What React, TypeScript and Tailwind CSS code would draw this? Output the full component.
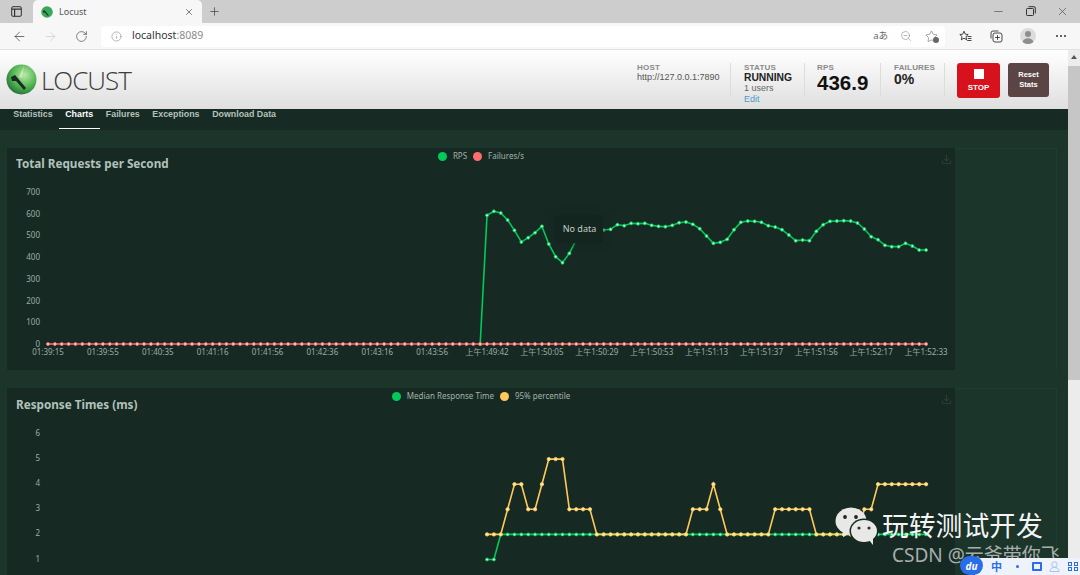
import { ArrowLeft, ArrowRight, Download, Info, Minus, Plus, RotateCw, Star, X, ZoomOut } from 'lucide-react';
import React from 'react';

const X0 = 48;
const STEP = 6.86;
const px = (i: number) => X0 + i * STEP;

// zoomed y readings of the rps curve, from the first sample after the jump
const RPS = [
	136, 124, 129, 150, 181, 216, 203, 188, 169, 222, 260, 278, 250, 210, 195, 185, 181, 180, 178, 164, 167, 160,
	161, 160, 166, 169, 170, 166, 158, 156, 163, 176, 198, 220, 217, 208, 179, 157, 153, 154, 157, 167, 171, 179,
	195, 212, 210, 212, 184, 164, 154, 153, 152, 153, 159, 177, 200, 209, 226, 230, 230, 220, 228, 240, 240,
];

const P95 = [
	2, 2, 2, 3, 4, 4, 3, 3, 4, 5, 5, 5, 3, 3, 3, 3, 2, 2, 2, 2, 2, 2, 2, 2, 2, 2, 2, 2, 2, 2, 3, 3, 3, 4, 3, 2, 2, 2,
	2, 2, 2, 2, 3, 3, 3, 3, 3, 3, 2, 2, 2, 2, 2, 2, 2, 3, 3, 4, 4, 4, 4, 4, 4, 4, 4,
];

const MEDIAN = P95.map((_, i) => (i < 2 ? 1 : 2));

const X_LABELS = [
	'01:39:15',
	'01:39:55',
	'01:40:35',
	'01:41:16',
	'01:41:56',
	'01:42:36',
	'01:43:16',
	'01:43:56',
	'上午1:49:42',
	'上午1:50:05',
	'上午1:50:29',
	'上午1:50:53',
	'上午1:51:13',
	'上午1:51:37',
	'上午1:51:56',
	'上午1:52:17',
	'上午1:52:33',
];

type Pt = [number, number];

function Series({ points, color, dot, r = 1.5 }: { points: Pt[]; color: string; dot: string; r?: number }) {
	return (
		<g>
			<polyline
				points={points.map((p) => p.join(',')).join(' ')}
				fill="none"
				stroke={color}
				strokeWidth={1.6}
			/>
			{points.map((p, i) => (
				<circle
					key={i}
					cx={p[0]}
					cy={p[1]}
					r={r}
					fill={dot}
					stroke={color}
					strokeWidth={0.8}
				/>
			))}
		</g>
	);
}

function YLabels({ labels }: { labels: [string, number][] }) {
	return (
		<g
			fill="#9dada6"
			fontSize={8}
			textAnchor="end"
		>
			{labels.map(([t, y]) => (
				<text
					key={t}
					x={40}
					y={y + 3}
				>
					{t}
				</text>
			))}
		</g>
	);
}

function RpsChart() {
	const rpsPts: Pt[] = [[px(63), 344], ...RPS.map((v, i): Pt => [px(64 + i), 170 + v / 3])];
	const failPts: Pt[] = Array.from({ length: 129 }, (_, i): Pt => [px(i), 344]);
	const ticks = ['700', '600', '500', '400', '300', '200', '100', '0'];
	return (
		<svg
			width={948}
			height={200}
			viewBox="7 170 948 200"
			className="block"
		>
			<YLabels labels={ticks.map((t, i): [string, number] => [t, 192 + i * 21.7])} />
			<Series
				points={rpsPts}
				color="#00ca5a"
				dot="#b4f5cf"
			/>
			<Series
				points={failPts}
				color="#ff6d6d"
				dot="#ffd2d2"
			/>
			<g
				fill="#9dada6"
				fontSize={8}
				textAnchor="middle"
			>
				{X_LABELS.map((t, i) => (
					<text
						key={t}
						x={X0 + i * 54.88}
						y={355}
					>
						{t}
					</text>
				))}
			</g>
		</svg>
	);
}

function ResponseChart() {
	const median: Pt[] = MEDIAN.map((v, i): Pt => [px(64 + i), 559.5 - (v - 1) * 25.1]);
	const p95: Pt[] = P95.map((v, i): Pt => [px(64 + i), 559.5 - (v - 1) * 25.1]);
	const ticks = ['6', '5', '4', '3', '2', '1'];
	return (
		<svg
			width={948}
			height={200}
			viewBox="7 410 948 200"
			className="block"
		>
			<YLabels labels={ticks.map((t, i): [string, number] => [t, 433 + i * 25.1])} />
			<Series
				points={median}
				color="#00ca5a"
				dot="#b4f5cf"
			/>
			<Series
				points={p95}
				color="#ffca5a"
				dot="#ffe9a8"
				r={1.7}
			/>
		</svg>
	);
}

function ChartCard({
	title,
	legend,
	children,
	className,
	titleClass,
}: {
	title: string;
	legend: [string, string][];
	children: React.ReactNode;
	className: string;
	titleClass: string;
}) {
	return (
		<div className={`relative w-[948px] shrink-0 overflow-hidden bg-[#162a23] ${className}`}>
			<div className="grid h-[22px] grid-cols-[1fr_auto_1fr] items-start">
				<h3 className={`pl-[9px] text-[11.7px] font-bold leading-[18px] text-[#b3c1bb] ${titleClass}`}>{title}</h3>
				<div className="flex items-center gap-[6px] pt-[3px]">
					{legend.map(([name, color]) => (
						<div
							key={name}
							className="flex items-center gap-[6px]"
						>
							<span
								className="h-[9px] w-[9px] rounded-full"
								style={{ background: color }}
							/>
							<span className="text-[8px] leading-[10px] text-[#a3b2ab]">{name}</span>
						</div>
					))}
				</div>
				<div className="flex justify-end pr-[3px] pt-[6px]">
					<Download
						size={11}
						strokeWidth={1}
						className="text-[#415d52]"
					/>
				</div>
			</div>
			{children}
		</div>
	);
}

function LocustLogo() {
	return (
		<svg
			width={31}
			height={31}
			viewBox="0 0 31 31"
		>
			<defs>
				<radialGradient
					id="locust-ball"
					cx="0.6"
					cy="0.35"
					r="0.75"
				>
					<stop
						offset="0"
						stopColor="#b9e8a8"
					/>
					<stop
						offset="0.55"
						stopColor="#4fb44f"
					/>
					<stop
						offset="1"
						stopColor="#1d5f35"
					/>
				</radialGradient>
			</defs>
			<circle
				cx={15.5}
				cy={15.5}
				r={15}
				fill="url(#locust-ball)"
			/>
			<path
				d="M18 2 L13 13 L16 14 Z"
				fill="#d7f3c8"
				opacity={0.7}
			/>
			<path
				d="M5 13 L9 11 L20 24 L18 26 L10 17 L6 17 Z"
				fill="#1b2a22"
			/>
		</svg>
	);
}

function Stat({ label, children, className }: { label: string; children: React.ReactNode; className: string }) {
	return (
		<div className={`h-[33px] border-r border-[#dcdcdc] ${className}`}>
			<div className="text-[8px] font-bold leading-[9px] tracking-[0.2px] text-[#8a8a8a]">{label}</div>
			{children}
		</div>
	);
}

function BrowserChrome() {
	return (
		<>
			<div className="flex h-[23px] items-center bg-[#cdcdce] text-[#333]">
				<div className="flex w-[33px] justify-center">
					<svg
						width={11}
						height={11}
						viewBox="0 0 11 11"
						fill="none"
						stroke="#333"
					>
						<rect
							x={0.7}
							y={0.7}
							width={9.6}
							height={9.6}
							rx={1.2}
						/>
						<path
							d="M0.7 3.2H10.3M3.6 3.2V10.3"
							strokeWidth={1.2}
						/>
					</svg>
				</div>
				<div className="flex h-full w-[169px] items-center rounded-t-[5px] bg-[#f7f7f7] pl-[8px] pr-[8px]">
					<svg
						width={12}
						height={12}
						viewBox="0 0 31 31"
					>
						<circle
							cx={15.5}
							cy={15.5}
							r={15}
							fill="#3aa85a"
						/>
						<path
							d="M5 13 L9 11 L20 24 L18 26 L10 17 L6 17 Z"
							fill="#1b2a22"
						/>
					</svg>
					<span className="ml-[6px] flex-1 text-[9px] text-[#555]">Locust</span>
					<X
						size={10}
						strokeWidth={1.5}
					/>
				</div>
				<Plus
					size={13}
					strokeWidth={1.2}
					className="ml-[6px]"
				/>
				<div className="flex-1" />
				<div className="flex items-center gap-[19px] pr-[11px]">
					<Minus
						size={13}
						strokeWidth={1}
					/>
					<svg
						width={13}
						height={13}
						viewBox="0 0 13 13"
						fill="none"
						stroke="#333"
					>
						<rect
							x={2.5}
							y={3.5}
							width={7}
							height={7}
							rx={0.8}
						/>
						<path d="M4.5 1.7H10a1.3 1.3 0 0 1 1.3 1.3V8.5" />
					</svg>
					<X
						size={13}
						strokeWidth={1}
					/>
				</div>
			</div>
			<div className="flex h-[27px] items-center border-b border-[#e2e2e2] bg-[#f7f7f7] text-[#333]">
				<div className="flex w-[101px] items-center pl-[12px]">
					<ArrowLeft
						size={15}
						strokeWidth={1.1}
					/>
					<ArrowRight
						size={15}
						strokeWidth={1.1}
						className="ml-[16px] text-[#c9c9c9]"
					/>
					<RotateCw
						size={13}
						strokeWidth={1.1}
						className="ml-[17px]"
					/>
				</div>
				<div className="flex h-[21px] w-[844px] items-center rounded-[4px] bg-white pl-[10px] pr-[7px]">
					<Info
						size={11}
						strokeWidth={1}
						className="text-[#666]"
					/>
					<span className="ml-[10px] flex-1 text-[10.5px] text-[#333]">
						localhost<span className="text-[#8b8b8b]">:8089</span>
					</span>
					<span className="text-[9.5px] text-[#666]">aあ</span>
					<ZoomOut
						size={12}
						strokeWidth={1}
						className="ml-[12px] text-[#777]"
					/>
					<span className="relative ml-[13px] flex">
						<Star
							size={13}
							strokeWidth={1}
							className="text-[#555]"
						/>
						<i className="absolute bottom-0 right-[-1px] h-[6px] w-[6px] rounded-full bg-[#666]" />
					</span>
				</div>
				<div className="flex flex-1 items-center pl-[14px]">
					<svg
						width={13}
						height={13}
						viewBox="0 0 13 13"
						fill="none"
						stroke="#333"
						strokeWidth={0.9}
					>
						<path d="M5 1.2 6.3 4.2 9.2 4.5 7 6.6 7.6 9.8 5 8.2 2.3 9.8 3 6.6 0.8 4.5 3.7 4.2Z" />
						<path d="M8.5 6.5H12.5M8.8 8.5H12.5M8.2 10.5H12.5" />
					</svg>
					<svg
						width={13}
						height={13}
						viewBox="0 0 13 13"
						fill="none"
						stroke="#333"
						strokeWidth={0.9}
						className="ml-[18px]"
					>
						<rect
							x={3}
							y={3}
							width={9}
							height={9}
							rx={2}
						/>
						<path d="M1 8.5V3a2 2 0 0 1 2-2h5.5M7.5 5.2V9.8M5.2 7.5H9.8" />
					</svg>
					<svg
						width={16}
						height={16}
						viewBox="0 0 16 16"
						className="ml-[17px]"
					>
						<circle
							cx={8}
							cy={8}
							r={8}
							fill="#dcdcdc"
						/>
						<circle
							cx={8}
							cy={6}
							r={3}
							fill="#8e8e8e"
						/>
						<path
							d="M2.6 14a5.6 5 0 0 1 10.8 0A8 8 0 0 1 2.6 14Z"
							fill="#8e8e8e"
						/>
					</svg>
					<span className="ml-[20px] flex gap-[2px]">
						<i className="h-[2px] w-[2px] rounded-full bg-[#333]" />
						<i className="h-[2px] w-[2px] rounded-full bg-[#333]" />
						<i className="h-[2px] w-[2px] rounded-full bg-[#333]" />
					</span>
				</div>
			</div>
		</>
	);
}

function LocustHeader() {
	return (
		<header className="flex h-[59px] items-start bg-gradient-to-b from-white to-[#dfdfdf] font-['Liberation_Sans',sans-serif]">
			<div className="flex items-center pl-[6px] pt-[14px]">
				<LocustLogo />
				<span className="ml-[4px] font-['Open_Sans',sans-serif] text-[26px] font-light leading-[30px] tracking-[-1px] text-[#3c3c3c]">
					LOCUST
				</span>
			</div>
			<div className="flex-1" />
			<div className="flex items-start pr-[19px] pt-[13px]">
				<Stat
					label="HOST"
					className="w-[94px]"
				>
					<div className="text-[9px] leading-[10px] text-[#555]">http://127.0.0.1:7890</div>
				</Stat>
				<Stat
					label="STATUS"
					className="w-[74px] pl-[13px]"
				>
					<div className="text-[10.3px] font-bold leading-[11px] text-[#222]">RUNNING</div>
					<div className="text-[9px] leading-[11px] text-[#666]">1 users</div>
					<div className="text-[9px] leading-[10px] text-[#4a9ccb]">Edit</div>
				</Stat>
				<Stat
					label="RPS"
					className="w-[76px] pl-[12px]"
				>
					<div className="text-[20.5px] font-bold leading-[22px] text-[#111]">436.9</div>
				</Stat>
				<Stat
					label="FAILURES"
					className="w-[64px] pl-[13px]"
				>
					<div className="text-[14px] font-bold leading-[15px] text-[#222]">0%</div>
				</Stat>
				<button className="ml-[12px] flex h-[35px] w-[43px] flex-col items-center rounded-[3px] bg-[#d8121c] pt-[6px]">
					<span className="h-[10px] w-[10px] bg-white" />
					<span className="mt-[4px] text-[8px] font-bold leading-[9px] text-white">STOP</span>
				</button>
				<button className="ml-[8px] flex h-[34px] w-[41px] flex-col items-center justify-center rounded-[3px] bg-[#5a4444] text-[7.5px] font-bold leading-[10px] text-white">
					<span>Reset</span>
					<span>Stats</span>
				</button>
			</div>
		</header>
	);
}

function LocustNav() {
	const tabs = ['Statistics', 'Charts', 'Failures', 'Exceptions', 'Download Data'];
	return (
		<nav className="flex h-[21px] bg-[#172b24] pl-[7px] font-['Liberation_Sans',sans-serif]">
			{tabs.map((tab) => (
				<span
					key={tab}
					className={`h-[20px] whitespace-nowrap px-[6.3px] text-[8.85px] font-bold leading-[11px] ${
						tab === 'Charts' ? 'border-b border-white text-white' : 'text-[#b5c2bc]'
					}`}
				>
					{tab}
				</span>
			))}
		</nav>
	);
}

export default function App() {
	return (
		<div className="relative flex h-[575px] w-[1080px] flex-col overflow-hidden bg-[#1b352b] font-['Noto_Sans','Noto_Sans_CJK_SC',sans-serif]">
			<BrowserChrome />
			<div className="flex min-h-0 flex-1">
				<main className="min-w-0 flex-1">
					<LocustHeader />
					<LocustNav />
					<div className="flex flex-col gap-[18px] pl-[7px] pt-[18px]">
						<div className="flex">
							<ChartCard
								title="Total Requests per Second"
								titleClass="pt-[6px]"
								legend={[
									['RPS', '#00ca5a'],
									['Failures/s', '#ff6d6d'],
								]}
								className="h-[222px]"
							>
								<RpsChart />
							</ChartCard>
							<div className="h-[222px] w-[102px] border-r border-t border-[#1f3c31]" />
						</div>
						<div className="flex">
							<ChartCard
								title="Response Times (ms)"
								titleClass="pt-[7px]"
								legend={[
									['Median Response Time', '#00ca5a'],
									['95% percentile', '#ffca5a'],
								]}
								className="h-[200px]"
							>
								<ResponseChart />
							</ChartCard>
							<div className="h-[200px] w-[102px] border-r border-t border-[#1f3c31]" />
						</div>
					</div>
				</main>
				<div className="flex w-[12px] flex-col items-center bg-[#ececec]">
					<div className="mt-[5px] h-0 w-0 border-x-[3px] border-b-[4px] border-x-transparent border-b-[#555]" />
					<div className="mt-[7px] h-[314px] w-full bg-[#c6c6c6]" />
				</div>
			</div>

			{/* tooltip over the rps chart */}
			<div className="absolute left-[556px] top-[215px] flex h-[28px] w-[47px] items-center justify-center rounded-[4px] bg-[#14251f] text-[9px] text-[#c4ccc8] shadow-[0_0_6px_#14251f]">
				No data
			</div>

			{/* wechat watermark */}
			<svg
				width={46}
				height={44}
				viewBox="0 0 46 44"
				className="absolute left-[835px] top-[505px]"
			>
				<ellipse
					cx={16}
					cy={16}
					rx={15.5}
					ry={13.5}
					fill="#e8e8e6"
				/>
				<path
					d="M8 25 L8 32 L15 28Z"
					fill="#e8e8e6"
				/>
				<circle
					cx={10}
					cy={12}
					r={1.9}
					fill="#222"
				/>
				<circle
					cx={21}
					cy={12}
					r={1.9}
					fill="#222"
				/>
				<ellipse
					cx={29}
					cy={26}
					rx={14.5}
					ry={12.5}
					fill="#162a23"
				/>
				<ellipse
					cx={29}
					cy={26}
					rx={13}
					ry={11}
					fill="#e8e8e6"
				/>
				<path
					d="M34 35 L38 40 L38 33Z"
					fill="#e8e8e6"
				/>
				<circle
					cx={24}
					cy={23}
					r={1.6}
					fill="#333"
				/>
				<circle
					cx={34}
					cy={23}
					r={1.6}
					fill="#333"
				/>
			</svg>
			<div className="absolute left-[882px] top-[508px] whitespace-nowrap text-[26.8px] leading-[36px] text-[#f4f4f4]">
				玩转测试开发
			</div>
			<div className="absolute left-[892px] top-[542px] whitespace-nowrap text-[19px] leading-[26px] text-[#a9aeab]">
				CSDN @云爷带你飞
			</div>

			{/* input method bar */}
			<div className="absolute bottom-0 left-[975px] flex h-[17px] w-[105px] items-center bg-[#eef3fb] pl-[16px] text-[#2a6de8]">
				<span className="text-[11px] font-bold leading-none">中</span>
				<span className="ml-[14px] h-[3px] w-[3px] rounded-full bg-[#2a6de8]" />
				<span className="ml-[13px] h-[9px] w-[10px] rounded-[1px] border-2 border-[#2a6de8]" />
				<svg
					width={11}
					height={11}
					viewBox="0 0 11 11"
					fill="none"
					stroke="#a9c2ef"
					className="ml-[7px]"
				>
					<circle
						cx={5.5}
						cy={3.5}
						r={2.7}
					/>
					<path d="M1 10.5c0-3 2-4 4.5-4s4.5 1 4.5 4Z" />
				</svg>
				<span className="ml-[8px] grid grid-cols-2 gap-[1.5px]">
					<i className="h-[4px] w-[4px] border border-[#2a6de8]" />
					<i className="h-[4px] w-[4px] border border-[#2a6de8]" />
					<i className="h-[4px] w-[4px] border border-[#2a6de8]" />
					<i className="h-[4px] w-[4px] border border-[#2a6de8]" />
				</span>
			</div>
			<div className="absolute bottom-0 left-[960px] flex h-[19px] w-[23px] items-center justify-center rounded-[10px] bg-[#2a6de8] text-[10px] font-bold italic leading-none text-white">
				du
			</div>
		</div>
	);
}
